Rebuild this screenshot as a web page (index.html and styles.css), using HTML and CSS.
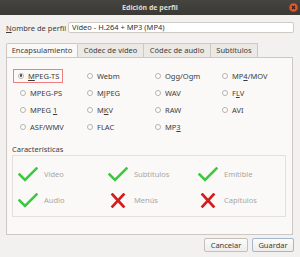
FILE: index.html
```html
<!DOCTYPE html>
<html lang="es">
<head>
    <meta charset="UTF-8">
    <title>Edición de perfil</title>
    <link rel="stylesheet" href="styles.css">
</head>
<body>
    <div class="window">
        <!-- Title bar -->
        <div class="titlebar">
            <span class="title">Edición de perfil</span>
            <span class="close">
                <svg width="9" height="9" viewBox="0 0 9 9"><circle cx="4.5" cy="4.5" r="4.3" fill="#e2582c" stroke="#b7401b" stroke-width="0.6"/><path d="M3 3 L6 6 M6 3 L3 6" stroke="#3a1a10" stroke-width="1.2"/></svg>
            </span>
        </div>
        <div class="content">
            <div class="name-row">
                <label class="name-label"><u>N</u>ombre de perfil</label>
                <div class="name-input">Vídeo - H.264 + MP3 (MP4)</div>
            </div>
            <!-- Tabs -->
            <div class="tabs">
                <div class="tab active">Encapsulamiento</div>
                <div class="tab">Códec de vídeo</div>
                <div class="tab">Códec de audio</div>
                <div class="tab">Subtítulos</div>
            </div>
            <div class="panel">
                <div class="formats">
                    <label class="radio checked focus"><span class="dot"></span><span><u>M</u>PEG-TS</span></label>
                    <label class="radio"><span class="dot"></span><span>Webm</span></label>
                    <label class="radio"><span class="dot"></span><span>Ogg/Ogm</span></label>
                    <label class="radio"><span class="dot"></span><span>MP<u>4</u>/MOV</span></label>
                    <label class="radio"><span class="dot"></span><span>MPEG-PS</span></label>
                    <label class="radio"><span class="dot"></span><span>M<u>J</u>PEG</span></label>
                    <label class="radio"><span class="dot"></span><span>WAV</span></label>
                    <label class="radio"><span class="dot"></span><span>F<u>L</u>V</span></label>
                    <label class="radio"><span class="dot"></span><span>MPEG <u>1</u></span></label>
                    <label class="radio"><span class="dot"></span><span>M<u>K</u>V</span></label>
                    <label class="radio"><span class="dot"></span><span>RAW</span></label>
                    <label class="radio"><span class="dot"></span><span>AVI</span></label>
                    <label class="radio"><span class="dot"></span><span>ASF/WMV</span></label>
                    <label class="radio"><span class="dot"></span><span>FLAC</span></label>
                    <label class="radio"><span class="dot"></span><span>MP<u>3</u></span></label>
                </div>
                <div class="features-title">Características</div>
                <div class="features">
                    <div class="feature"><svg class="yes" viewBox="0 0 20 15"><path d="M1.5 7.5 L7 13 L18.5 1.5"/></svg><span>Vídeo</span></div>
                    <div class="feature"><svg class="yes" viewBox="0 0 20 15"><path d="M1.5 7.5 L7 13 L18.5 1.5"/></svg><span>Subtítulos</span></div>
                    <div class="feature"><svg class="yes" viewBox="0 0 20 15"><path d="M1.5 7.5 L7 13 L18.5 1.5"/></svg><span>Emitible</span></div>
                    <div class="feature"><svg class="yes" viewBox="0 0 20 15"><path d="M1.5 7.5 L7 13 L18.5 1.5"/></svg><span>Audio</span></div>
                    <div class="feature"><svg class="no" viewBox="0 0 20 15"><path d="M4.5 1.5 L15.5 13.5 M15.5 1.5 L4.5 13.5"/></svg><span>Menús</span></div>
                    <div class="feature"><svg class="no" viewBox="0 0 20 15"><path d="M4.5 1.5 L15.5 13.5 M15.5 1.5 L4.5 13.5"/></svg><span>Capítulos</span></div>
                </div>
            </div>
            <div class="buttons">
                <button class="btn">Cancelar</button>
                <button class="btn default">Guardar</button>
            </div>
        </div>
    </div>
</body>
</html>
```

FILE: styles.css
```css
html, body { margin: 0; padding: 0; }
body { width: 300px; height: 257px; overflow: hidden; background: #f2f1f0; font-family: "Noto Sans", "Open Sans", sans-serif; font-size: 7.5px; color: #3c3c3c; white-space: nowrap; }
.window { display: flex; flex-direction: column; height: 257px; }
.titlebar { height: 15px; background: linear-gradient(#45443f, #3a3935); color: #dfdbd2; font-weight: bold; font-size: 7px; display: flex; justify-content: center; align-items: center; position: relative; }
.close { position: absolute; right: 2px; top: 3px; width: 9px; height: 9px; }
.close svg { display: block; }
.content { flex: 1; display: flex; flex-direction: column; padding: 7px 6px 5px 6px; }
.name-row { display: flex; align-items: center; height: 11px; }
.name-label { width: 62px; }
.name-input { flex: 1; height: 11px; line-height: 9px; box-sizing: border-box; background: #fff; border: 1px solid #cfcac4; border-radius: 2px; padding-left: 3px; color: #333; }
.tabs { display: flex; margin-top: 10px; height: 14px; }
.tab { box-sizing: border-box; height: 14px; line-height: 13px; text-align: center; border: 1px solid #cdc8c2; border-bottom: none; border-left: none; background: #ebe9e6; color: #3c3c3c; }
.tab.active { background: #faf9f8; border-left: 1px solid #cdc8c2; border-radius: 2px 2px 0 0; width: 72px; }
.tab:nth-child(2) { width: 66px; }
.tab:nth-child(3) { width: 67px; }
.tab:nth-child(4) { width: 47px; }
.panel { flex: 1; box-sizing: border-box; background: #faf9f8; border: 1px solid #cdc8c2; margin-right: 1px; padding: 9px 4px 17px 5px; display: flex; flex-direction: column; }
.formats { display: grid; grid-template-columns: 67px 68px 67px 68px; grid-auto-rows: 17px; padding-left: 3px; }
.radio { display: flex; align-items: center; gap: 4px; align-self: center; height: 12px; padding-left: 5px; }
.radio .dot { width: 6px; height: 6px; border: 1px solid #b7b2ac; border-radius: 50%; background: #fff; box-sizing: border-box; display: flex; align-items: center; justify-content: center; }
.radio.checked .dot::after { content: ""; width: 2.5px; height: 2.5px; border-radius: 50%; background: #444; }
.radio.focus { outline: 1px solid #f08080; width: 48px; box-sizing: border-box; margin-left: -1px; padding-left: 4px; }
.features-title { margin-top: 9px; height: 11px; line-height: 11px; color: #3c3c3c; }
.features { flex: 1; border: 1px solid #e4e1dd; display: grid; grid-template-columns: 90px 90px 1fr; grid-auto-rows: 26px; padding: 5px 0 0 5px; margin-right: 2px; }
.feature { display: flex; align-items: center; gap: 6px; color: #a9a6a2; }
.feature svg { width: 20px; height: 15px; flex: none; }
.feature svg path { fill: none; stroke-width: 2.6; stroke-linecap: square; }
.yes path { stroke: #3ec83e; }
.no path { stroke: #d41d1d; }
.buttons { display: flex; justify-content: flex-end; gap: 4px; margin-top: 3px; }
.btn { height: 14px; padding: 0; border: 1px solid #c4bfb9; border-radius: 2px; background: linear-gradient(#fbfbfa, #eeedeb); font-family: inherit; font-size: 7.5px; color: #3c3c3c; width: 44px; }
.btn.default { width: 42px; border-color: #a3b7cd; }
```
